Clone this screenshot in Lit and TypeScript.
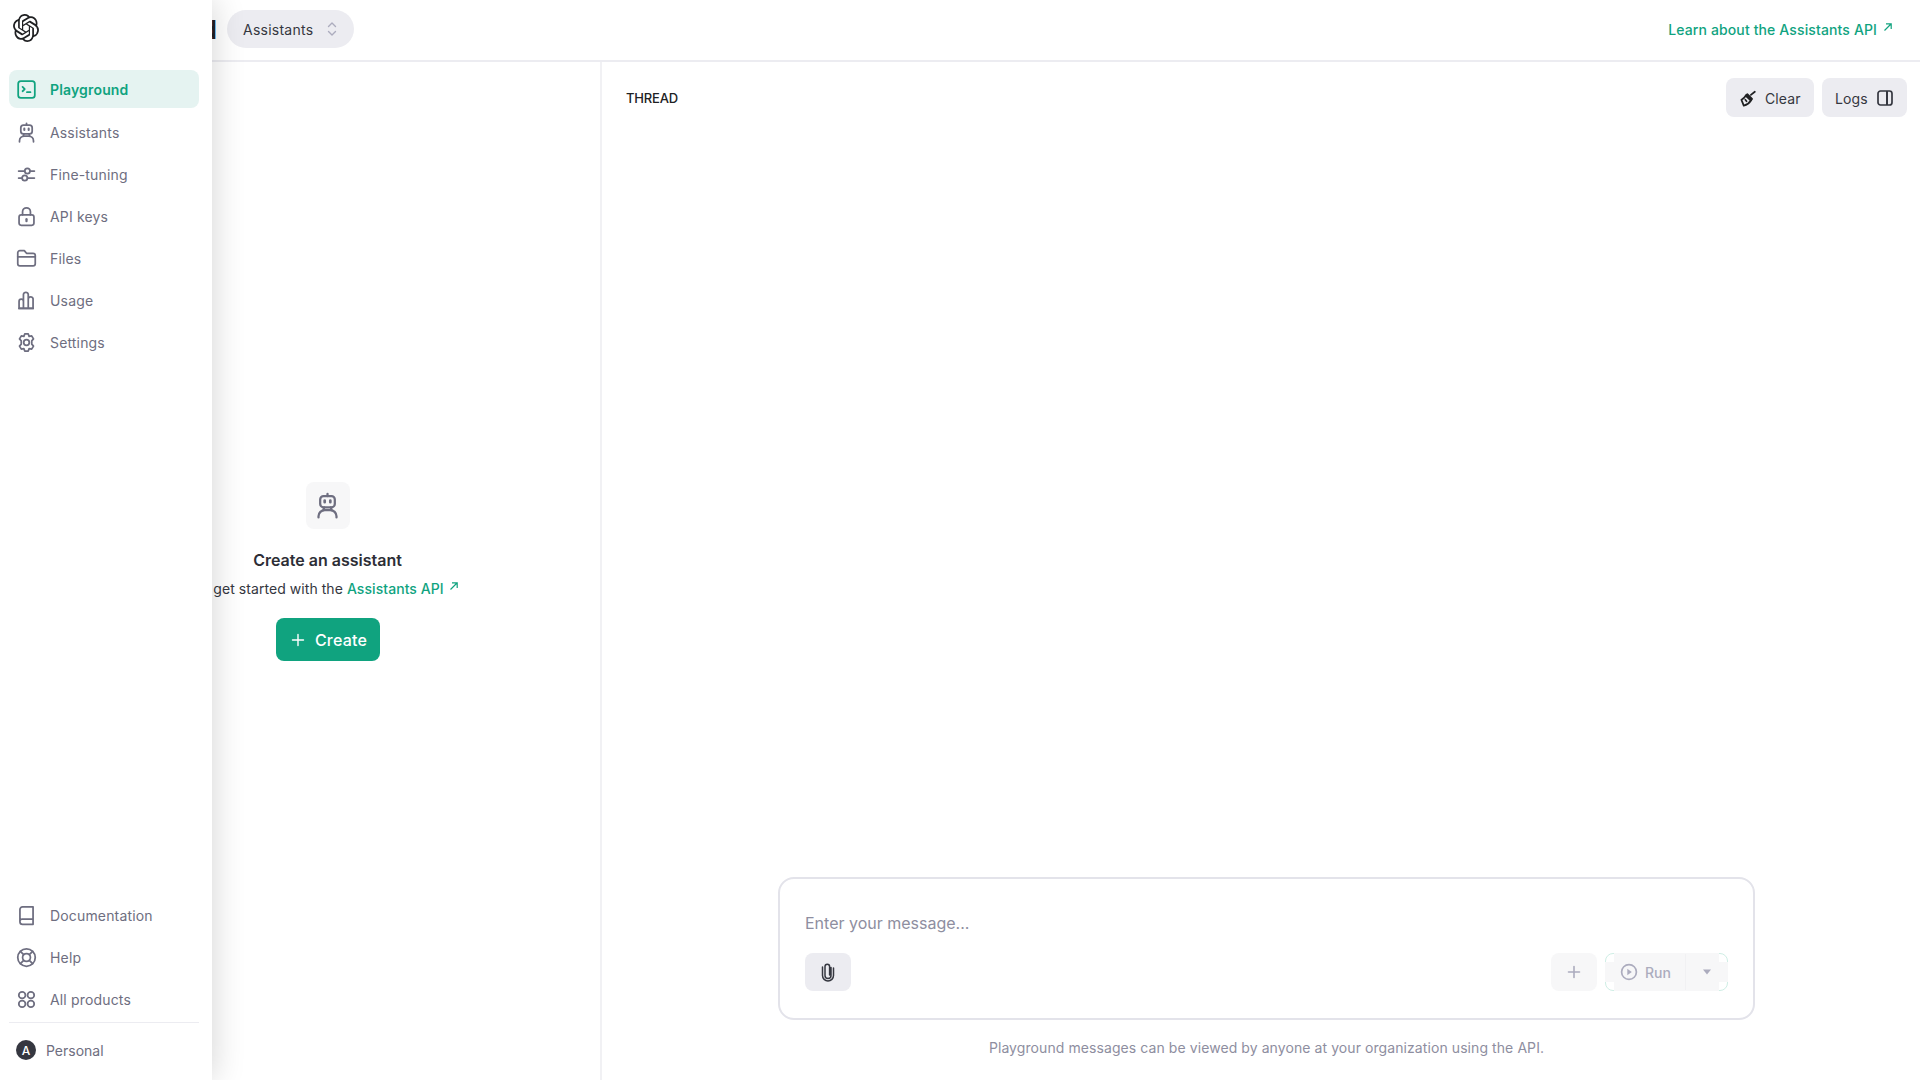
import { LitElement, html, css, svg } from "lit";
import { customElement } from "lit/decorators.js";

const ico = (body: unknown, size = 21, vb = 24) => html`<svg class="ic" width=${size} height=${size} viewBox="0 0 ${vb} ${vb}" fill="none" stroke="currentColor" stroke-width="2" stroke-linecap="round" stroke-linejoin="round">${body}</svg>`;

const robot = svg`<path d="M12 1.600v2"/><rect x="5.500" y="3.600" width="13" height="10" rx="3"/><path d="M9.500 7.600v1.400M14.500 7.600v1.400" stroke-width="2.400"/><path d="M9 13.600l-.6 2.400M15 13.600l.6 2.400"/><path d="M4 22.600v-1a5.600 5.600 0 0 1 5.600-5.600h4.800a5.600 5.600 0 0 1 5.600 5.600v1"/>`;

const logoPath = "M22.2819 9.8211a5.9847 5.9847 0 0 0-.5157-4.9108 6.0462 6.0462 0 0 0-6.5098-2.9A6.0651 6.0651 0 0 0 4.9807 4.1818a5.9847 5.9847 0 0 0-3.9977 2.9 6.0462 6.0462 0 0 0 .7427 7.0966 5.98 5.98 0 0 0 .511 4.9107 6.051 6.051 0 0 0 6.5146 2.9001A5.9847 5.9847 0 0 0 13.2599 24a6.0557 6.0557 0 0 0 5.7718-4.2058 5.9894 5.9894 0 0 0 3.9977-2.9001 6.0557 6.0557 0 0 0-.7475-7.0729zm-9.022 12.6081a4.4755 4.4755 0 0 1-2.8764-1.0408l.1419-.0804 4.7783-2.7582a.7948.7948 0 0 0 .3927-.6813v-6.7369l2.02 1.1686a.071.071 0 0 1 .038.052v5.5826a4.504 4.504 0 0 1-4.4945 4.4944zm-9.6607-4.1254a4.4708 4.4708 0 0 1-.5346-3.0137l.142.0852 4.783 2.7582a.7712.7712 0 0 0 .7806 0l5.8428-3.3685v2.3324a.0804.0804 0 0 1-.0332.0615L9.74 19.9502a4.4992 4.4992 0 0 1-6.1408-1.6464zM2.3408 7.8956a4.485 4.485 0 0 1 2.3655-1.9728V11.6a.7664.7664 0 0 0 .3879.6765l5.8144 3.3543-2.0201 1.1685a.0757.0757 0 0 1-.071 0l-4.8303-2.7865A4.504 4.504 0 0 1 2.3408 7.872zm16.5963 3.8558L13.1038 8.364 15.1192 7.2a.0757.0757 0 0 1 .071 0l4.8303 2.7913a4.4944 4.4944 0 0 1-.6765 8.1042v-5.6772a.79.79 0 0 0-.407-.667zm2.0107-3.0231l-.142-.0852-4.7735-2.7818a.7759.7759 0 0 0-.7854 0L9.409 9.2297V6.8974a.0662.0662 0 0 1 .0284-.0615l4.8303-2.7866a4.4992 4.4992 0 0 1 6.6802 4.66zM8.3065 12.863l-2.02-1.1638a.0804.0804 0 0 1-.038-.0567V6.0742a4.4992 4.4992 0 0 1 7.3757-3.4537l-.142.0805L8.704 5.459a.7948.7948 0 0 0-.3927.6813zm1.0976-2.3654l2.602-1.4998 2.6069 1.4998v2.9994l-2.5974 1.4997-2.6067-1.4997Z";

const icons: Record<string, unknown> = {
  playground: svg`<rect x="2.500" y="2.500" width="19" height="19" rx="3"/><path d="M7.500 9l2.500 2.600L7.500 14M12.500 15h4"/>`,
  assistants: robot,
  tuning: svg`<path d="M3 8h7M16 8h5M3 16h4M13 16h8"/><circle cx="13" cy="8" r="3"/><circle cx="10" cy="16" r="3"/>`,
  keys: svg`<rect x="3.500" y="10" width="17" height="12" rx="2.500"/><path d="M7.500 10V6.500a4.500 4.500 0 0 1 9 0V10"/><path d="M12 15v2.400" stroke-width="2.600"/>`,
  files: svg`<path d="M2 7V5.500A2.500 2.500 0 0 1 4.500 3H9.500l2.500 3h7.500A2.500 2.500 0 0 1 22 8.500V18a2.500 2.500 0 0 1-2.500 2.500h-15A2.500 2.500 0 0 1 2 18z"/><path d="M2 10h20"/>`,
  usage: svg`<path d="M3.500 21v-8a2.500 2.500 0 0 1 5 0v8zM8.500 21V5a2.800 2.800 0 0 1 5.500 0v16zM14 21V10a2.800 2.800 0 0 1 5.500 0v11z"/><path d="M3.500 21h16"/>`,
  settings: svg`<path d="M10 2.200h4l1 2.800 2.900-.6 2.100 3.500-2 2.200v3.800l2 2.200-2.100 3.500-2.900-.6-1 2.800h-4l-1-2.800-2.900.6L4 16.100l2-2.200v-3.800l-2-2.200 2.100-3.500 2.900.6z"/><circle cx="12" cy="12" r="3.200"/>`,
  docs: svg`<path d="M4.500 19V5a3 3 0 0 1 3-3h12v20h-12a3 3 0 0 1-3-3zM4.500 18.500a2.500 2.500 0 0 1 2.500-2.500h12.500"/>`,
  help: svg`<circle cx="12" cy="12" r="10"/><circle cx="12" cy="12" r="4.500"/><path d="M5 5l3.800 3.800M19 5l-3.800 3.800M5 19l3.800-3.800M19 19l-3.800-3.800"/>`,
  products: svg`<circle cx="7" cy="7" r="3.800"/><circle cx="17" cy="7" r="3.800"/><circle cx="7" cy="17" r="3.800"/><circle cx="17" cy="17" r="3.800"/>`,
};

const ext = html`<svg class="ext" width="10" height="10" viewBox="0 0 10 10" fill="none" stroke="currentColor" stroke-width="1.200"><path d="M1.500 8.500L8 2M3 1.800h5.200V7"/></svg>`;

const top = [
  ["playground", "Playground"], ["assistants", "Assistants"], ["tuning", "Fine-tuning"],
  ["keys", "API keys"], ["files", "Files"], ["usage", "Usage"], ["settings", "Settings"],
];
const bottom = [["docs", "Documentation"], ["help", "Help"], ["products", "All products"]];

@customElement("app-root")
export class AppRoot extends LitElement {
  static styles = css`
    :host { display: block; height: 1080px; width: 1920px; position: relative; overflow: hidden; background: #fff;
      font-family: Inter, "Liberation Sans", sans-serif; font-size: 14px; color: #353740; }
    * { box-sizing: border-box; }
    .ic { display: block; flex: none; }
    button { font: inherit; border: 0; padding: 0; }

    .side { position: absolute; left: 0; top: 0; bottom: 0; width: 212px; background: #fff; z-index: 2;
      box-shadow: 2px 0 30px rgba(0,0,0,.16); display: flex; flex-direction: column; padding: 0 13px 0 9px; }
    .logo { height: 70px; padding: 14px 0 0 4px; color: #202123; }
    .logo svg { display: block; }
    .nav { display: flex; flex-direction: column; gap: 4px; }
    .spacer { flex: 1; }
    .item { height: 38px; display: flex; align-items: center; gap: 13px; padding-left: 7px; border-radius: 8px; color: #6e6e80; letter-spacing: .16px; width: 190px; }
    .item span { padding-top: 1px; }
    .item.on { background: #e5f3f1; color: #10a37f; font-weight: 600; margin-bottom: 1px; }
    .rule { height: 1px; width: 190px; background: #ececf1; margin: 4px 0 0; }
    .person { height: 57px; display: flex; align-items: center; gap: 10px; padding: 0 0 3px 7px; color: #6e6e80; }
    .avatar { width: 20px; height: 20px; border-radius: 50%; background: #353740; color: #fff; font-size: 12px; font-weight: 500; display: flex; align-items: center; justify-content: center; }

    .page { height: 100%; display: flex; flex-direction: column; }
    .head { height: 62px; flex: none; display: flex; align-items: center; border-bottom: 2px solid #ececf1; padding: 0 27px 2px 0; }
    .title { width: 217px; flex: none; text-align: right; white-space: nowrap; font-size: 26px; font-weight: 600; color: #202123; overflow: hidden; }
    .chip { margin-left: 10px; width: 127px; height: 38px; border-radius: 19px; background: #ececf1; display: flex; align-items: center; justify-content: space-between; padding: 0 17px 0 16px; color: #353740; letter-spacing: .25px; }
    .chip .ic { color: #acacbe; }
    .learn { margin-left: auto; color: #10a37f; font-weight: 500; display: flex; align-items: flex-start; gap: 6px; letter-spacing: .13px; }
    .learn .ext { margin-top: 1px; }

    .body { flex: 1; display: flex; min-height: 0; }
    .left { width: 602px; flex: none; padding-left: 55px; border-right: 2px solid #f1f1f4; display: flex; flex-direction: column; align-items: center; padding-top: 420px; }
    .tile { width: 44px; height: 47px; border-radius: 8px; background: #f7f7f8; color: #6e6e80; display: flex; align-items: center; justify-content: center; }
    .empty-title { margin-top: 20px; font-size: 16px; line-height: 22px; font-weight: 600; color: #2d2e36; }
    .empty-text { margin-top: 7px; line-height: 22px; color: #353740; white-space: nowrap; letter-spacing: .06px; }
    .empty-text a { color: #10a37f; font-weight: 500; }
    .empty-text .ext { display: inline-block; vertical-align: 3px; margin-left: 5px; color: #10a37f; }
    .create { margin-top: 18px; width: 104px; height: 43px; border-radius: 8px; background: #10a37f; color: #fff; font-size: 16px; font-weight: 500; display: flex; align-items: center; justify-content: center; gap: 10px; letter-spacing: .2px; padding-left: 3px; }

    .right { flex: 1; min-width: 0; display: flex; flex-direction: column; }
    .thread-bar { display: flex; align-items: center; height: 39px; margin-top: 16px; padding: 0 13px 0 24px; gap: 8px; }
    .thread { font-size: 13px; font-weight: 500; color: #202123; margin-right: auto; letter-spacing: -.2px; }
    .soft { height: 39px; border-radius: 8px; background: #ececf1; display: flex; align-items: center; color: #353740; letter-spacing: .1px; padding-top: 1px; }
    .clear { width: 88px; gap: 7px; padding-left: 13px; }
    .logs { width: 85px; gap: 9px; padding-left: 13px; }
    .thread-fill { flex: 1; }
    .foot { display: flex; flex-direction: column; align-items: center; padding-left: 11px; padding-bottom: 21px; }
    .box { width: 977px; height: 143px; border: 2px solid #e3e3ea; border-radius: 16px; padding: 0 25px; display: flex; flex-direction: column; }
    .ph { margin-top: 32px; font-size: 16px; line-height: 24px; color: #8e8ea0; }
    .tools { margin-top: 18px; display: flex; align-items: center; }
    .attach { width: 46px; height: 38px; border-radius: 8px; background: #ececf1; display: flex; align-items: center; justify-content: center; color: #353740; }
    .plus { margin-left: auto; width: 46px; height: 38px; border-radius: 8px; background: #f7f7f8; display: flex; align-items: center; justify-content: center; color: #acacbe; }
    .runwrap { margin-left: 8px; width: 123px; height: 38px; border: 1px solid #cfeee5; border-radius: 8px; position: relative; display: flex; color: #acacbe; font-weight: 500; }
    .runwrap::before { content: ""; position: absolute; top: -1px; bottom: -1px; left: 8px; right: 8px; background: #f7f7f8; }
    .runwrap::after { content: ""; position: absolute; left: -1px; right: -1px; top: 8px; bottom: 8px; background: #f7f7f8; }
    .run { position: relative; z-index: 1; width: 80px; display: flex; align-items: center; gap: 7px; padding-left: 14px; border-right: 1px solid #f1f1f3; }
    .drop { position: relative; z-index: 1; flex: 1; display: flex; align-items: center; justify-content: center; }
    .note { margin-top: 17px; line-height: 22px; color: #8e8ea0; letter-spacing: .08px; }
  `;

  private item(i: string[], on = false) {
    return html`<div class="item ${on ? "on" : ""}">${ico(icons[i[0]])}<span>${i[1]}</span></div>`;
  }

  render() {
    return html`
      <aside class="side">
        <div class="logo"><svg width="26" height="28" viewBox="0 0 24 24" fill="currentColor" preserveAspectRatio="none"><path d=${logoPath}/></svg></div>
        <nav class="nav">${top.map((t, n) => this.item(t, n === 0))}</nav>
        <div class="spacer"></div>
        <nav class="nav">${bottom.map((t) => this.item(t))}</nav>
        <div class="rule"></div>
        <div class="person"><span class="avatar">A</span><span>Personal</span></div>
      </aside>
      <div class="page">
        <header class="head">
          <div class="title">Playground</div>
          <div class="chip"><span>Assistants</span>
            <svg class="ic" width="10" height="16" viewBox="0 0 10 16" fill="none" stroke="currentColor" stroke-width="1.400" stroke-linecap="round" stroke-linejoin="round"><path d="M1.500 5.500L5 2l3.500 3.500M1.500 10.500L5 14l3.500-3.500"/></svg>
          </div>
          <a class="learn">Learn about the Assistants API ${ext}</a>
        </header>
        <div class="body">
          <section class="left">
            <div class="tile">${ico(robot, 27)}</div>
            <div class="empty-title">Create an assistant</div>
            <div class="empty-text">to get started with the <a>Assistants API</a>${ext}</div>
            <button class="create">
              <svg class="ic" width="14" height="14" viewBox="0 0 14 14" fill="none" stroke="currentColor" stroke-width="1.400" stroke-linecap="round"><path d="M7 1.500v11M1.500 7h11"/></svg>
              Create</button>
          </section>
          <section class="right">
            <div class="thread-bar">
              <span class="thread">THREAD</span>
              <button class="soft clear">
                <svg class="ic" width="19" height="19" viewBox="0 0 24 24" fill="none" stroke="#202123" stroke-width="2.200" stroke-linejoin="round" stroke-linecap="round"><path d="M20 3.500l-5 4"/><path d="M10.500 6.500l6 6-1.500 2-6.500-6.500z" fill="#202123"/><path d="M8.500 8.500c-1.500 2.500-3 4-5.500 5l3 7.500c4-1 7-3 9-6.500z"/><path d="M8 13.500l1.500 2"/></svg>
                Clear</button>
              <button class="soft logs">Logs
                <svg class="ic" width="16" height="16" viewBox="0 0 16 16" fill="none" stroke="#353740" stroke-width="1.700"><rect x="1" y="1" width="14" height="14" rx="2.500"/><path d="M10 1v14" stroke-width="2"/></svg>
              </button>
            </div>
            <div class="thread-fill"></div>
            <div class="foot">
              <div class="box">
                <div class="ph">Enter your message...</div>
                <div class="tools">
                  <button class="attach">
                    <svg class="ic" width="14" height="20" viewBox="0 0 14 20" fill="none" stroke="#353740" stroke-width="1.500" stroke-linecap="round"><path d="M10 5.500v8a3 3 0 0 1-6 0V4.500a2.300 2.300 0 0 1 4.600 0v8.500"/><path d="M12.500 6v7.500a5.500 5.500 0 0 1-11 0V5"/></svg>
                  </button>
                  <button class="plus"><svg class="ic" width="14" height="14" viewBox="0 0 14 14" fill="none" stroke="currentColor" stroke-width="1.600" stroke-linecap="round"><path d="M7 1.500v11M1.500 7h11"/></svg></button>
                  <div class="runwrap">
                    <div class="run">
                      <svg class="ic" width="18" height="18" viewBox="0 0 18 18" fill="none" stroke="currentColor" stroke-width="1.700"><circle cx="9" cy="9" r="7.400"/><path d="M7.300 5.800l4.500 3.200-4.500 3.200z" fill="currentColor" stroke="none"/></svg>
                      Run</div>
                    <div class="drop"><svg class="ic" width="10" height="6" viewBox="0 0 10 6" fill="currentColor"><path d="M1 .5h8L5 5.500z"/></svg></div>
                  </div>
                </div>
              </div>
              <div class="note">Playground messages can be viewed by anyone at your organization using the API.</div>
            </div>
          </section>
        </div>
      </div>
    `;
  }
}
